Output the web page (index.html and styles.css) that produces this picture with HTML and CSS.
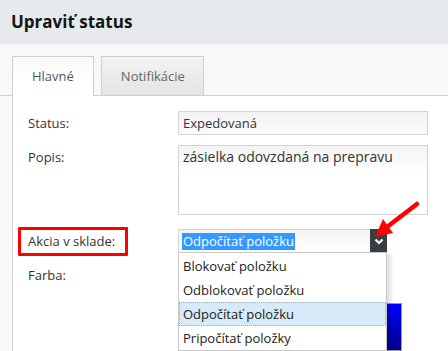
FILE: index.html
```html
<!DOCTYPE html>
<html lang="sk">
<head>
<meta charset="utf-8">
<title>Upraviť status</title>
<link rel="stylesheet" href="styles.css">
</head>
<body>
<header class="header"><h1 class="title">Upraviť status</h1></header>
<nav class="tabs">
  <div class="tab tab-active">Hlavné</div>
  <div class="tab">Notifikácie</div>
</nav>
<main class="panel">
  <div class="form">
    <div class="label">Status:</div>
    <div class="field"><div class="input">Expedovaná</div></div>

    <div class="label">Popis:</div>
    <div class="field"><div class="textarea">zásielka odovzdaná na prepravu</div></div>

    <div class="label label-mark row-akcia">Akcia v sklade:<span class="mark"></span></div>
    <div class="field row-akcia">
      <div class="select">
        <span class="select-value">Odpočítať položku</span>
        <span class="select-btn">
          <svg width="10" height="7" viewBox="0 0 10 7"><polyline points="1.5,1.5 5,5 8.5,1.5" fill="none" stroke="#fff" stroke-width="2.2"/></svg>
        </span>
        <ul class="dropdown">
          <li class="opt">Blokovať položku</li>
          <li class="opt">Odblokovať položku</li>
          <li class="opt opt-hover">Odpočítať položku</li>
          <li class="opt">Pripočítať položky</li>
        </ul>
      </div>
    </div>

    <div class="label">Farba:</div>
    <div class="field"><div class="swatch"></div></div>
  </div>
</main>
<svg class="arrow" width="448" height="351" viewBox="0 0 448 351">
  <line x1="417" y1="204" x2="387" y2="227" stroke="#f00" stroke-width="4.5" stroke-linecap="round"/>
  <polygon points="375,237 383,219 393,233" fill="#f00"/>
</svg>
</body>
</html>
```

FILE: styles.css
```css
html, body {
  margin: 0;
  padding: 0;
}
body {
  background: #f8f8f8;
  font-family: "Open Sans", "Liberation Sans", sans-serif;
  font-size: 13px;
  color: #333;
  position: relative;
  height: 351px;
  overflow: hidden;
}
.header {
  background: #e6eaed;
  height: 44px;
  padding-left: 11px;
}
.title {
  margin: 0;
  font-size: 17px;
  font-weight: 700;
  line-height: 43px;
  color: #141414;
}
.tabs {
  display: flex;
  gap: 7px;
  padding: 12px 0 0 12px;
  border-bottom: 1px solid #cfcfcf;
  height: 39px;
}
.tab {
  height: 38px;
  line-height: 38px;
  padding: 0 18px 0 19px;
  border: 1px solid #cfcfcf;
  border-bottom: none;
  background: linear-gradient(#f3f3f3, #e4e4e4);
  color: #666;
  font-size: 13px;
}
.tab-active {
  height: 39px;
  margin-bottom: -1px;
  background: linear-gradient(#f9f9f9, #ffffff 60%);
  color: #555;
  padding: 0 19px 0 19px;
}
.panel {
  margin-left: 12px;
  border-left: 1px solid #cfcfcf;
  background: #fff;
  padding: 15px 0 0 15px;
  height: 240px;
}
.form {
  display: grid;
  grid-template-columns: 150px 1fr;
  row-gap: 10px;
  align-items: start;
}
.label {
  line-height: 24px;
  color: #333;
}
.row-akcia {
  margin-top: 4px;
}
.label-mark {
  position: relative;
}
.mark {
  position: absolute;
  left: -10px;
  top: -2px;
  width: 110px;
  height: 29px;
  box-sizing: border-box;
  border: 3px solid #ff0000;
  border-radius: 1px;
}
.input {
  width: 250px;
  height: 24px;
  box-sizing: border-box;
  border: 1px solid #d4d4d4;
  background: linear-gradient(#f2f2f2, #fbfbfb);
  padding: 0 4px;
  line-height: 22px;
  color: #333;
}
.textarea {
  width: 250px;
  height: 70px;
  box-sizing: border-box;
  border: 1px solid #d4d4d4;
  background: linear-gradient(#f4f4f4, #ffffff 40%);
  padding: 1px 4px;
  font-size: 14px;
  line-height: 19px;
  color: #333;
}
.select {
  position: relative;
  width: 209px;
  height: 24px;
  box-sizing: border-box;
  border: 1px solid #d4d4d4;
  border-right: none;
  background: linear-gradient(#f4f4f4, #ffffff);
  display: flex;
  align-items: center;
  padding-left: 3px;
}
.select-value {
  background: #3399ff;
  color: #fff;
  line-height: 17px;
  padding: 0 1px;
}
.select-btn {
  position: absolute;
  right: 0;
  top: -1px;
  width: 17px;
  height: 24px;
  background: #393e41;
  display: flex;
  align-items: center;
  justify-content: center;
}
.dropdown {
  position: absolute;
  left: -1px;
  top: 22px;
  width: 209px;
  box-sizing: border-box;
  margin: 0;
  padding: 1px 0 0;
  list-style: none;
  background: #fff;
  border: 1px solid #c8c8c8;
  box-shadow: 4px 2px 4px rgba(0, 0, 0, 0.12);
  z-index: 2;
}
.opt {
  height: 24px;
  line-height: 24px;
  padding-left: 4px;
  color: #222;
  box-sizing: border-box;
}
.opt-hover {
  background: #d6eaf7;
  border: 1px dotted #8fb2d4;
  padding-left: 3px;
  line-height: 22px;
}
.swatch {
  margin-top: 40px;
  width: 224px;
  height: 48px;
  box-sizing: border-box;
  border: 1px solid #9a9a9a;
  background: linear-gradient(#0000ff, #00008a);
}
.arrow {
  position: absolute;
  left: 0;
  top: 0;
  pointer-events: none;
  z-index: 5;
}
```
